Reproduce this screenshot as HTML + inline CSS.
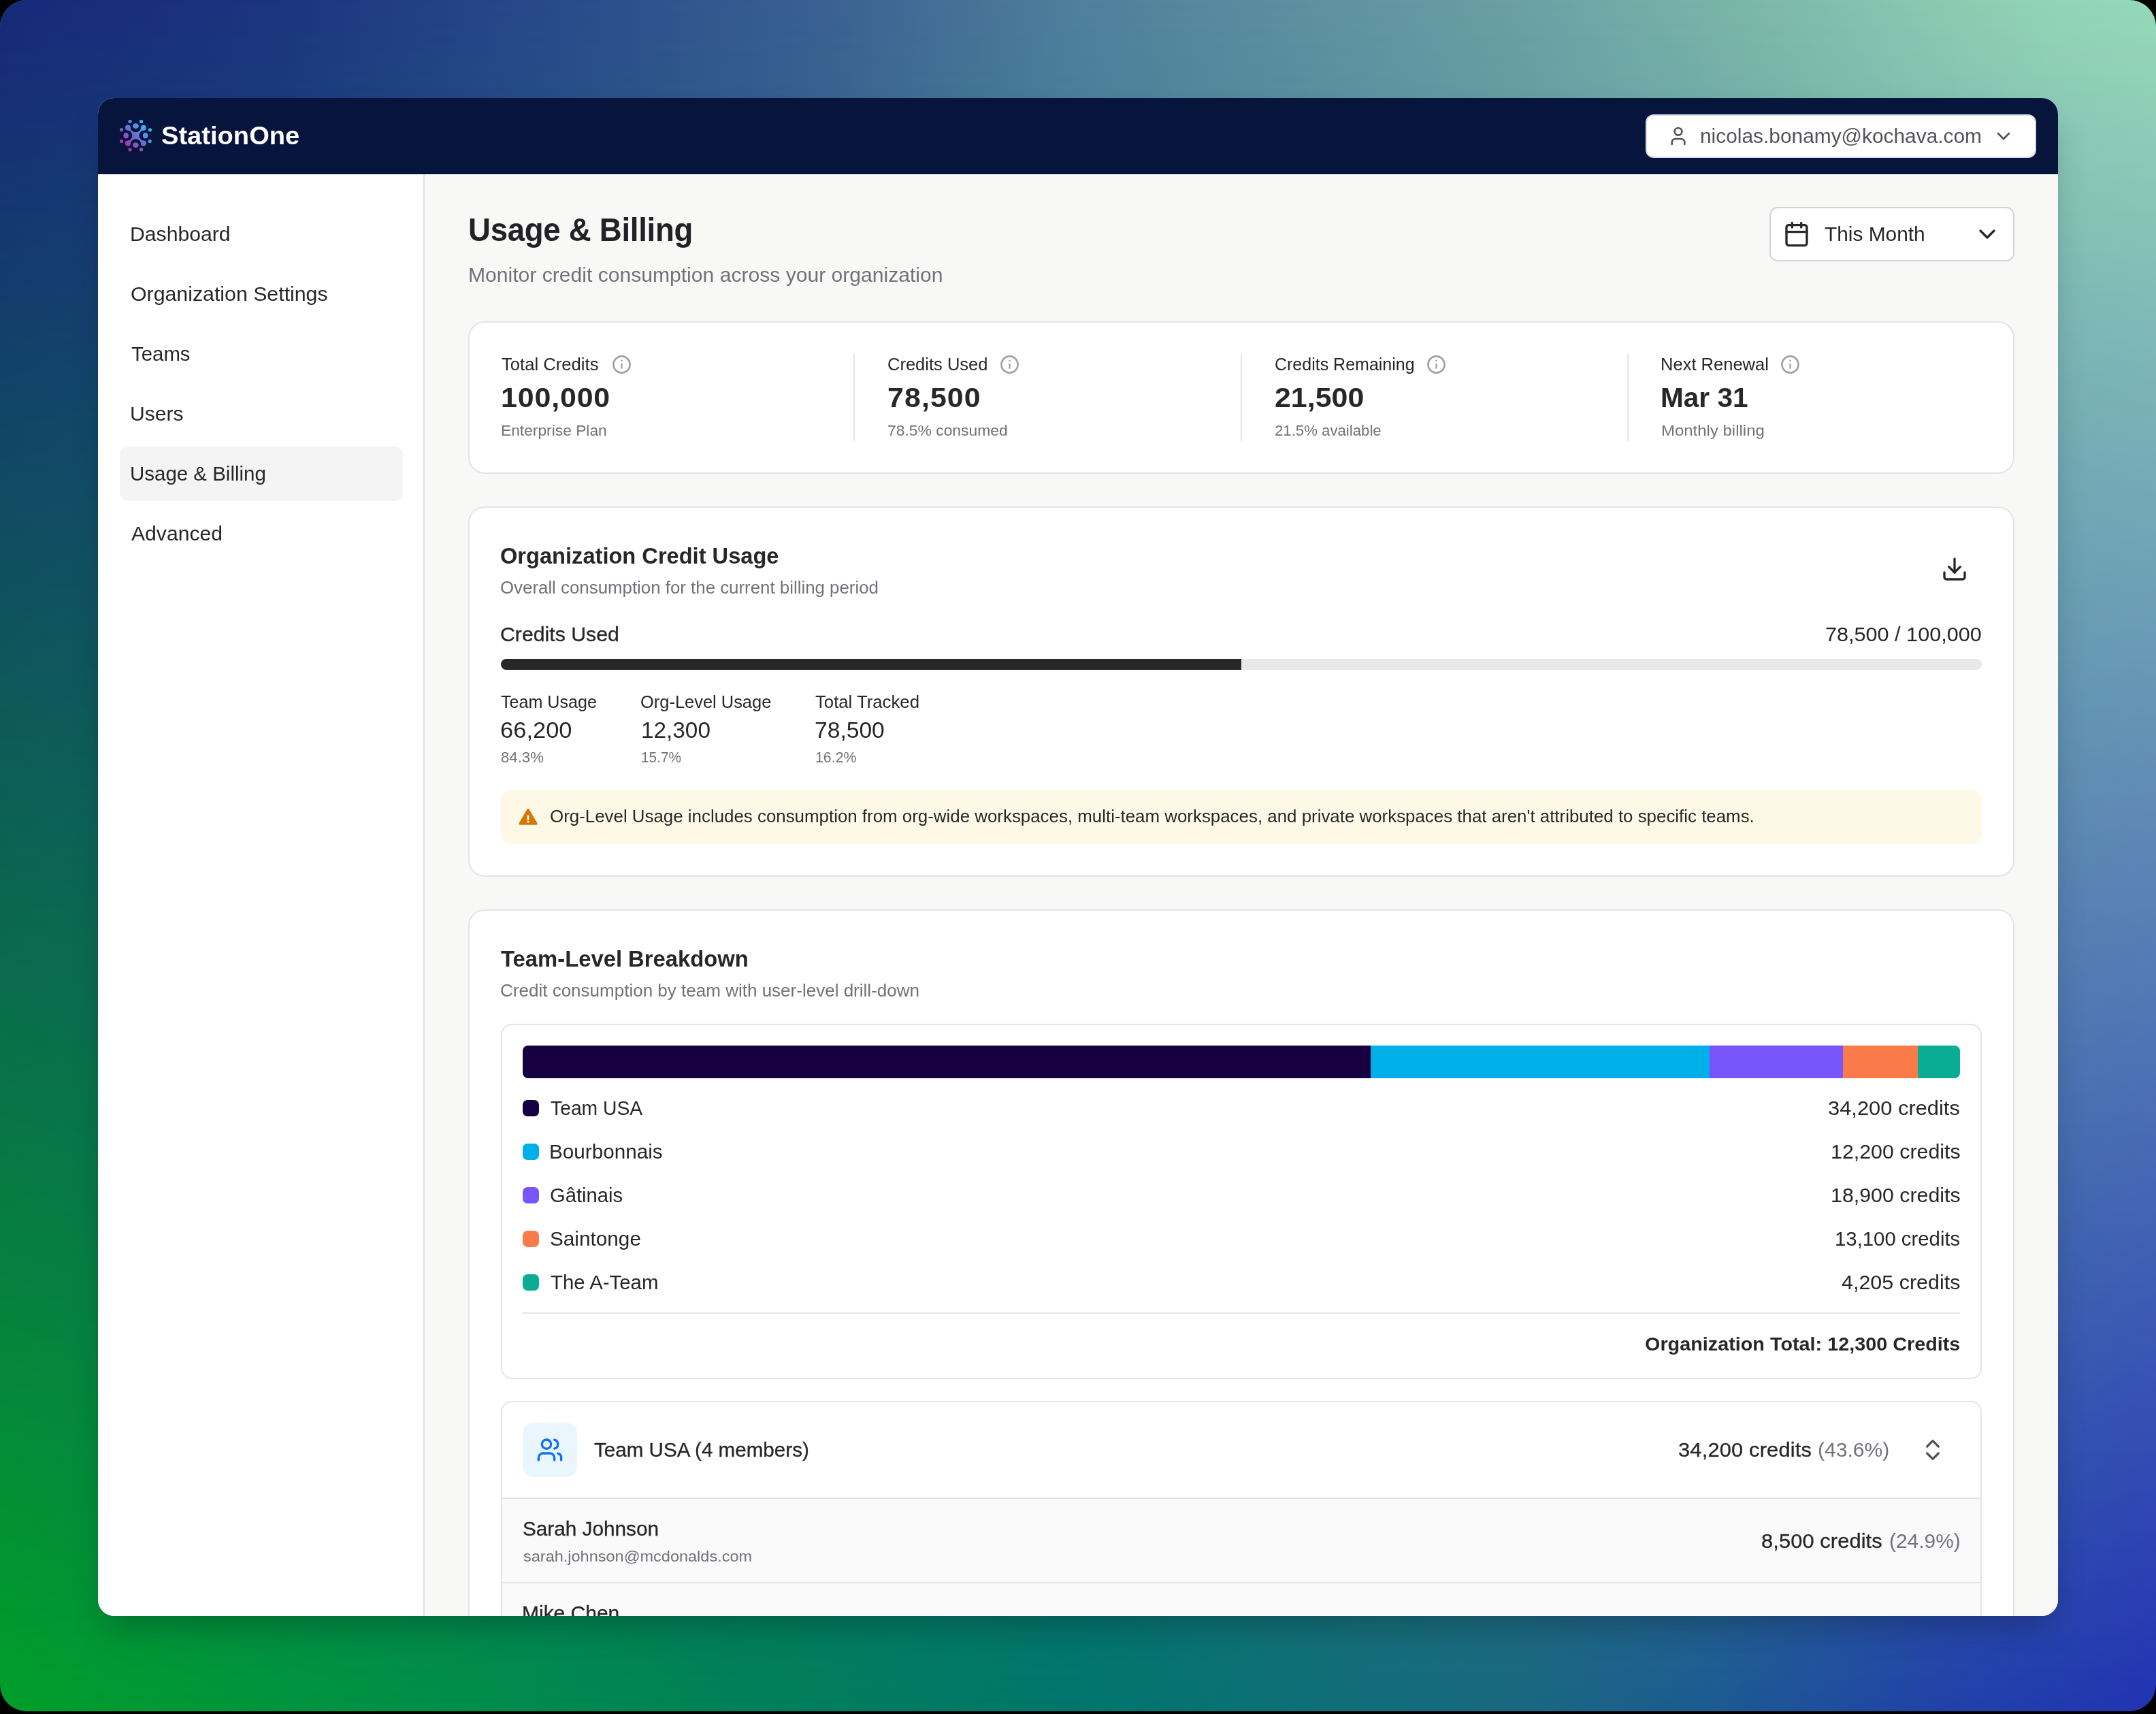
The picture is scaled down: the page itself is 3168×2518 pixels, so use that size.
<!DOCTYPE html>
<html><head><meta charset="utf-8"><title>Usage &amp; Billing</title>
<style>
html,body{margin:0;padding:0;}
body{width:3168px;height:2518px;background:#000;position:relative;overflow:hidden;font-family:"Liberation Sans",sans-serif;}
#bg{position:absolute;left:0;top:0;width:3168px;height:2514px;border-radius:39px;overflow:hidden;background:linear-gradient(to right,#009f2a 0%,#008f48 20%,#008059 35%,#00756c 50%,#0e6f76 60%,#19687f 70%,#1d5a92 80%,#2142a8 90%,#2233b3 100%);}
#bg:before{content:"";position:absolute;inset:0;background:linear-gradient(to right,#17287a 0%,#1b347f 12.6%,#28488a 25%,#3a6092 38%,#4f7f9c 50%,#5d8fa0 60%,#6a9fa4 70%,#7ab4a9 80%,#8bcab1 90%,#92d4b6 95%,#96d9b8 100%);-webkit-mask-image:linear-gradient(to bottom,#000,transparent);mask-image:linear-gradient(to bottom,#000,transparent);}
#win{position:absolute;left:144px;top:144px;width:2880px;height:2230px;border-radius:24px;overflow:hidden;background:#f8f8f6;}
#shadow{position:absolute;left:144px;top:144px;width:2880px;height:2230px;border-radius:24px;box-shadow:0 25px 50px -12px rgba(0,0,0,0.26);}
.t{position:absolute;white-space:pre;line-height:1;transform-origin:0 0;}
</style></head><body>
<div id="bg"></div>
<div id="shadow"></div>
<div id="win">
<div style="position:absolute;left:0px;top:0px;width:2880px;height:112px;background:#07143c;"></div>
<div style="position:absolute;left:0px;top:111px;width:2880px;height:1px;background:#030b2c;"></div>
<div style="position:absolute;left:0px;top:112px;width:478px;height:2118px;background:#fff;"></div>
<div style="position:absolute;left:478px;top:112px;width:2px;height:2118px;background:#e4e4e7;"></div>
<div style="position:absolute;left:480px;top:112px;width:2400px;height:2118px;background:#f8f8f6;"></div>
<div style="position:absolute;left:480px;top:112px;width:2400px;height:1.3px;background:#fff;"></div>
<svg style="position:absolute;left:32px;top:32px" width="48" height="48" viewBox="0 0 48 48">
<defs><linearGradient id="lg" gradientUnits="userSpaceOnUse" x1="42" y1="6" x2="6" y2="42"><stop offset="0" stop-color="#2fc3ff"/><stop offset="0.5" stop-color="#6a6fd2"/><stop offset="1" stop-color="#b62a9e"/></linearGradient></defs>
<g fill="url(#lg)">
<path d="M11.85 11.5 L34.8 34.6 M34.8 11.7 L11.85 34.6" stroke="url(#lg)" stroke-width="9" stroke-linecap="butt" fill="none"/>
<g fill="#07143c"><ellipse cx="23.4" cy="9.2" rx="8.3" ry="9.1"/><ellipse cx="23.4" cy="37.3" rx="8.3" ry="9.1"/><ellipse cx="9.2" cy="23.2" rx="9.1" ry="8.3"/><ellipse cx="37.6" cy="23.2" rx="9.1" ry="8.3"/></g>
<circle cx="11.85" cy="11.5" r="4"/><circle cx="34.8" cy="11.7" r="4"/><circle cx="11.85" cy="34.6" r="4"/><circle cx="34.8" cy="34.6" r="4"/>
<ellipse cx="23.4" cy="9.2" rx="4.4" ry="3.85"/><ellipse cx="23.4" cy="37.2" rx="4.4" ry="3.85"/>
<ellipse cx="9.2" cy="23.2" rx="3.85" ry="4.4"/><ellipse cx="37.6" cy="23.2" rx="3.85" ry="4.4"/>
<circle cx="15" cy="2.5" r="2.6"/><circle cx="31.6" cy="2.5" r="2.6"/><circle cx="44.4" cy="14.8" r="2.6"/><circle cx="44.2" cy="31.45" r="2.6"/><circle cx="31.6" cy="43.7" r="2.6"/><circle cx="15" cy="43.8" r="2.6"/><circle cx="2.6" cy="31.45" r="2.6"/><circle cx="2.6" cy="14.7" r="2.6"/>
</g></svg>
<div style="position:absolute;left:2274px;top:24px;width:574px;height:64px;background:#fff;border:2px solid #dcdcec;border-radius:12px;box-sizing:border-box;"></div>
<svg style="position:absolute;left:2306px;top:40px" width="32" height="32" viewBox="0 0 24 24" fill="none" stroke="#52525b" stroke-width="2" stroke-linecap="round" stroke-linejoin="round" ><path d="M19 21v-2a4 4 0 0 0-4-4H9a4 4 0 0 0-4 4v2"/><circle cx="12" cy="7" r="4"/></svg>
<svg style="position:absolute;left:2784px;top:40px" width="32" height="32" viewBox="0 0 24 24" fill="none" stroke="#52525b" stroke-width="2" stroke-linecap="round" stroke-linejoin="round" ><path d="m6 9 6 6 6-6"/></svg>
<div style="position:absolute;left:32px;top:512px;width:416px;height:80px;background:#f4f4f5;border-radius:12px;"></div>
<div style="position:absolute;left:2456px;top:160px;width:360px;height:80px;background:#fff;border:2px solid #d4d4d8;border-radius:12px;box-sizing:border-box;"></div>
<svg style="position:absolute;left:2476px;top:180px" width="40" height="40" viewBox="0 0 24 24" fill="none" stroke="#27272a" stroke-width="2" stroke-linecap="round" stroke-linejoin="round" ><path d="M8 2v4"/><path d="M16 2v4"/><rect width="18" height="18" x="3" y="4" rx="2"/><path d="M3 10h18"/></svg>
<svg style="position:absolute;left:2756px;top:180px" width="40" height="40" viewBox="0 0 24 24" fill="none" stroke="#27272a" stroke-width="2" stroke-linecap="round" stroke-linejoin="round" ><path d="m6 9 6 6 6-6"/></svg>
<div style="position:absolute;left:544px;top:328px;width:2272px;height:224px;background:#fff;border:2px solid #e4e4e7;border-radius:24px;box-sizing:border-box;"></div>
<div style="position:absolute;left:1110px;top:376px;width:2px;height:128px;background:#e4e4e7;"></div>
<div style="position:absolute;left:1678.5px;top:376px;width:2px;height:128px;background:#e4e4e7;"></div>
<div style="position:absolute;left:2247px;top:376px;width:2px;height:128px;background:#e4e4e7;"></div>
<svg style="position:absolute;left:755.1px;top:377.1px" width="29" height="29" viewBox="0 0 24 24" fill="none" stroke="#a0a0aa" stroke-width="2.2" stroke-linecap="round" stroke-linejoin="round" ><circle cx="12" cy="12" r="10"/><path d="M12 16.4v-4.6" stroke-width="1.9"/><path d="M12 7.3h.01" stroke-width="2.1"/></svg>
<svg style="position:absolute;left:1325.4px;top:377.1px" width="29" height="29" viewBox="0 0 24 24" fill="none" stroke="#a0a0aa" stroke-width="2.2" stroke-linecap="round" stroke-linejoin="round" ><circle cx="12" cy="12" r="10"/><path d="M12 16.4v-4.6" stroke-width="1.9"/><path d="M12 7.3h.01" stroke-width="2.1"/></svg>
<svg style="position:absolute;left:1952.1px;top:377.1px" width="29" height="29" viewBox="0 0 24 24" fill="none" stroke="#a0a0aa" stroke-width="2.2" stroke-linecap="round" stroke-linejoin="round" ><circle cx="12" cy="12" r="10"/><path d="M12 16.4v-4.6" stroke-width="1.9"/><path d="M12 7.3h.01" stroke-width="2.1"/></svg>
<svg style="position:absolute;left:2472.2px;top:377.1px" width="29" height="29" viewBox="0 0 24 24" fill="none" stroke="#a0a0aa" stroke-width="2.2" stroke-linecap="round" stroke-linejoin="round" ><circle cx="12" cy="12" r="10"/><path d="M12 16.4v-4.6" stroke-width="1.9"/><path d="M12 7.3h.01" stroke-width="2.1"/></svg>
<div style="position:absolute;left:544px;top:600px;width:2272px;height:544px;background:#fff;border:2px solid #e4e4e7;border-radius:24px;box-sizing:border-box;"></div>
<svg style="position:absolute;left:2708px;top:672px" width="40" height="40" viewBox="0 0 24 24" fill="none" stroke="#27272a" stroke-width="2" stroke-linecap="round" stroke-linejoin="round" ><path d="M21 15v4a2 2 0 0 1-2 2H5a2 2 0 0 1-2-2v-4"/><polyline points="7 10 12 15 17 10"/><line x1="12" x2="12" y1="15" y2="3"/></svg>
<div style="position:absolute;left:592px;top:824px;width:2176px;height:16px;background:#e8e8ea;border-radius:8px;"></div>
<div style="position:absolute;left:592px;top:824px;width:1088px;height:16px;background:#27272a;border-radius:8px 0 0 8px;"></div>
<div style="position:absolute;left:592px;top:1016px;width:2176px;height:80px;background:#fef9e7;border-radius:16px;"></div>
<svg style="position:absolute;left:616px;top:1040px" width="32" height="32" viewBox="0 0 32 32"><path d="M14.4 4.9 2.7 25.1a1.8 1.8 0 0 0 1.6 2.7h23.4a1.8 1.8 0 0 0 1.6-2.7L17.6 4.9a1.85 1.85 0 0 0-3.2 0z" fill="#d97706"/><path d="M16 14.5v5" stroke="#fff" stroke-width="2.6" stroke-linecap="round"/><circle cx="16" cy="22.9" r="1.5" fill="#fff"/></svg>
<div style="position:absolute;left:544px;top:1192px;width:2272px;height:1400px;background:#fff;border:2px solid #e4e4e7;border-radius:24px;box-sizing:border-box;"></div>
<div style="position:absolute;left:592px;top:1360px;width:2176px;height:522px;background:#fff;border:2px solid #e4e4e7;border-radius:16px;box-sizing:border-box;"></div>
<div style="position:absolute;left:624px;top:1392px;width:1246px;height:48px;background:#160042;border-radius:8px 0 0 8px;"></div>
<div style="position:absolute;left:1870px;top:1392px;width:498px;height:48px;background:#00aee8;"></div>
<div style="position:absolute;left:2368px;top:1392px;width:196px;height:48px;background:#7855fa;"></div>
<div style="position:absolute;left:2564px;top:1392px;width:110px;height:48px;background:#fb7a4a;"></div>
<div style="position:absolute;left:2674px;top:1392px;width:62px;height:48px;background:#0aad94;border-radius:0 8px 8px 0;"></div>
<div style="position:absolute;left:624px;top:1472px;width:24px;height:24px;background:#160042;border-radius:7px;"></div>
<div style="position:absolute;left:624px;top:1536px;width:24px;height:24px;background:#00aee8;border-radius:7px;"></div>
<div style="position:absolute;left:624px;top:1600px;width:24px;height:24px;background:#7855fa;border-radius:7px;"></div>
<div style="position:absolute;left:624px;top:1664px;width:24px;height:24px;background:#fb7a4a;border-radius:7px;"></div>
<div style="position:absolute;left:624px;top:1728px;width:24px;height:24px;background:#0aad94;border-radius:7px;"></div>
<div style="position:absolute;left:624px;top:1784px;width:2112px;height:2px;background:#e4e4e7;"></div>
<div style="position:absolute;left:592px;top:1914px;width:2176px;height:800px;background:#fff;border:2px solid #e4e4e7;border-radius:16px;box-sizing:border-box;overflow:hidden;"><div style="position:absolute;left:0;top:142px;width:2176px;height:700px;background:#fafafa"></div><div style="position:absolute;left:0;top:140px;width:2176px;height:2px;background:#e4e4e7"></div><div style="position:absolute;left:0;top:264px;width:2176px;height:2px;background:#e4e4e7"></div></div>
<div style="position:absolute;left:624px;top:1946px;width:80px;height:80px;background:#eaf6fe;border-radius:16px;"></div>
<svg style="position:absolute;left:644px;top:1966px" width="40" height="40" viewBox="0 0 24 24" fill="none" stroke="#1170f0" stroke-width="2" stroke-linecap="round" stroke-linejoin="round" ><path d="M16 21v-2a4 4 0 0 0-4-4H6a4 4 0 0 0-4 4v2"/><circle cx="9" cy="7" r="4"/><path d="M22 21v-2a4 4 0 0 0-3-3.87"/><path d="M16 3.13a4 4 0 0 1 0 7.75"/></svg>
<svg style="position:absolute;left:2676px;top:1966px" width="40" height="40" viewBox="0 0 24 24" fill="none" stroke="#52525b" stroke-width="2" stroke-linecap="round" stroke-linejoin="round" ><path d="m7 15 5 5 5-5"/><path d="m7 9 5-5 5 5"/></svg>
<div class="t" style="left:93.25px;top:37.51px;font-size:36.20px;letter-spacing:0.000px;transform:scaleX(1.0530);color:#fff;font-weight:700;">StationOne</div>
<div class="t" style="left:2353.77px;top:42.31px;font-size:29.12px;letter-spacing:0.000px;transform:scaleX(1.0265);color:#52525b;">nicolas.bonamy@kochava.com</div>
<div class="t" style="left:46.93px;top:186.00px;font-size:29.12px;letter-spacing:0.000px;transform:scaleX(1.0365);color:#27272a;">Dashboard</div>
<div class="t" style="left:47.96px;top:274.00px;font-size:29.12px;letter-spacing:0.000px;transform:scaleX(1.0406);color:#27272a;">Organization Settings</div>
<div class="t" style="left:49.00px;top:362.00px;font-size:29.12px;letter-spacing:0.000px;transform:scaleX(1.0096);color:#27272a;">Teams</div>
<div class="t" style="left:46.93px;top:450.00px;font-size:29.12px;letter-spacing:0.000px;transform:scaleX(1.0332);color:#27272a;">Users</div>
<div class="t" style="left:46.98px;top:538.00px;font-size:29.12px;letter-spacing:0.000px;transform:scaleX(1.0123);color:#27272a;">Usage &amp; Billing</div>
<div class="t" style="left:49.00px;top:626.00px;font-size:29.12px;letter-spacing:0.000px;transform:scaleX(1.0344);color:#27272a;">Advanced</div>
<div class="t" style="left:544.37px;top:169.21px;font-size:48.50px;letter-spacing:-0.306px;transform:scaleX(0.9400);color:#222226;font-weight:700;">Usage &amp; Billing</div>
<div class="t" style="left:544.18px;top:245.61px;font-size:29.12px;letter-spacing:0.000px;transform:scaleX(1.0338);color:#71717a;">Monitor credit consumption across your organization</div>
<div class="t" style="left:2537.00px;top:186.00px;font-size:29.12px;letter-spacing:0.000px;transform:scaleX(1.0260);color:#27272a;">This Month</div>
<div class="t" style="left:593.20px;top:378.81px;font-size:24.96px;letter-spacing:0.000px;transform:scaleX(1.0275);color:#27272a;">Total Credits</div>
<div class="t" style="left:591.88px;top:420.00px;font-size:40.50px;letter-spacing:0.795px;transform:scaleX(1.0600);color:#27272a;font-weight:700;">100,000</div>
<div class="t" style="left:592.20px;top:477.21px;font-size:22.88px;letter-spacing:0.000px;transform:scaleX(0.9957);color:#71717a;">Enterprise Plan</div>
<div class="t" style="left:1160.18px;top:378.81px;font-size:24.96px;letter-spacing:0.000px;transform:scaleX(1.0222);color:#27272a;">Credits Used</div>
<div class="t" style="left:1160.14px;top:420.00px;font-size:40.50px;letter-spacing:1.013px;transform:scaleX(1.0600);color:#27272a;font-weight:700;">78,500</div>
<div class="t" style="left:1160.20px;top:477.21px;font-size:22.88px;letter-spacing:0.000px;transform:scaleX(0.9998);color:#71717a;">78.5% consumed</div>
<div class="t" style="left:1728.90px;top:378.81px;font-size:24.96px;letter-spacing:0.000px;transform:scaleX(1.0016);color:#27272a;">Credits Remaining</div>
<div class="t" style="left:1728.84px;top:420.00px;font-size:40.50px;letter-spacing:-0.000px;transform:scaleX(1.0598);color:#27272a;font-weight:700;">21,500</div>
<div class="t" style="left:1728.93px;top:477.21px;font-size:22.88px;letter-spacing:0.000px;transform:scaleX(0.9700);color:#71717a;">21.5% available</div>
<div class="t" style="left:2295.95px;top:378.81px;font-size:24.96px;letter-spacing:0.000px;transform:scaleX(1.0231);color:#27272a;">Next Renewal</div>
<div class="t" style="left:2296.00px;top:420.00px;font-size:40.50px;letter-spacing:-0.000px;transform:scaleX(1.0016);color:#27272a;font-weight:700;">Mar 31</div>
<div class="t" style="left:2296.95px;top:477.21px;font-size:22.88px;letter-spacing:0.000px;transform:scaleX(1.0473);color:#71717a;">Monthly billing</div>
<div class="t" style="left:591.40px;top:657.30px;font-size:32.50px;letter-spacing:0.000px;transform:scaleX(1.0033);color:#27272a;font-weight:700;">Organization Credit Usage</div>
<div class="t" style="left:591.36px;top:707.11px;font-size:24.96px;letter-spacing:0.000px;transform:scaleX(1.0357);color:#71717a;">Overall consumption for the current billing period</div>
<div class="t" style="left:591.36px;top:774.22px;font-size:29.12px;letter-spacing:-0.000px;transform:scaleX(1.0388);color:#27272a;-webkit-text-stroke:0.3px #27272a;">Credits Used</div>
<div class="t" style="left:2537.55px;top:774.00px;font-size:29.12px;letter-spacing:0.000px;transform:scaleX(1.0514);color:#27272a;">78,500 / 100,000</div>
<div class="t" style="left:592.40px;top:874.81px;font-size:24.96px;letter-spacing:0.000px;transform:scaleX(1.0057);color:#27272a;">Team Usage</div>
<div class="t" style="left:591.36px;top:912.41px;font-size:33.28px;letter-spacing:0.000px;transform:scaleX(1.0375);color:#27272a;">66,200</div>
<div class="t" style="left:592.40px;top:958.41px;font-size:22.00px;letter-spacing:-0.000px;transform:scaleX(1.0078);color:#71717a;">84.3%</div>
<div class="t" style="left:797.28px;top:874.81px;font-size:24.96px;letter-spacing:0.000px;transform:scaleX(1.0196);color:#27272a;">Org-Level Usage</div>
<div class="t" style="left:797.80px;top:912.41px;font-size:33.28px;letter-spacing:0.000px;transform:scaleX(1.0016);color:#27272a;">12,300</div>
<div class="t" style="left:798.35px;top:958.41px;font-size:22.00px;letter-spacing:0.000px;transform:scaleX(0.9454);color:#71717a;">15.7%</div>
<div class="t" style="left:1054.40px;top:874.81px;font-size:24.96px;letter-spacing:0.000px;transform:scaleX(1.0306);color:#27272a;">Total Tracked</div>
<div class="t" style="left:1053.39px;top:912.41px;font-size:33.28px;letter-spacing:0.000px;transform:scaleX(1.0105);color:#27272a;">78,500</div>
<div class="t" style="left:1054.43px;top:958.41px;font-size:22.00px;letter-spacing:0.000px;transform:scaleX(0.9701);color:#71717a;">16.2%</div>
<div class="t" style="left:663.76px;top:1042.81px;font-size:24.96px;letter-spacing:-0.000px;transform:scaleX(1.0371);color:#27272a;">Org-Level Usage includes consumption from org-wide workspaces, multi-team workspaces, and private workspaces that aren&#x27;t attributed to specific teams.</div>
<div class="t" style="left:592.40px;top:1249.21px;font-size:32.50px;letter-spacing:0.000px;transform:scaleX(1.0090);color:#27272a;font-weight:700;">Team-Level Breakdown</div>
<div class="t" style="left:591.36px;top:1299.00px;font-size:24.96px;letter-spacing:0.000px;transform:scaleX(1.0426);color:#71717a;">Credit consumption by team with user-level drill-down</div>
<div class="t" style="left:664.80px;top:1470.00px;font-size:29.12px;letter-spacing:0.000px;transform:scaleX(0.9720);color:#27272a;">Team USA</div>
<div class="t" style="left:2542.44px;top:1470.00px;font-size:29.12px;letter-spacing:0.001px;transform:scaleX(1.0600);color:#27272a;">34,200 credits</div>
<div class="t" style="left:662.76px;top:1534.00px;font-size:29.12px;letter-spacing:-0.000px;transform:scaleX(1.0193);color:#27272a;">Bourbonnais</div>
<div class="t" style="left:2545.61px;top:1534.00px;font-size:29.12px;letter-spacing:0.000px;transform:scaleX(1.0427);color:#27272a;">12,200 credits</div>
<div class="t" style="left:663.80px;top:1598.00px;font-size:29.12px;letter-spacing:-0.000px;transform:scaleX(1.0016);color:#27272a;">Gâtinais</div>
<div class="t" style="left:2545.61px;top:1598.00px;font-size:29.12px;letter-spacing:0.000px;transform:scaleX(1.0427);color:#27272a;">18,900 credits</div>
<div class="t" style="left:663.78px;top:1662.00px;font-size:29.12px;letter-spacing:0.000px;transform:scaleX(1.0216);color:#27272a;">Saintonge</div>
<div class="t" style="left:2551.98px;top:1662.00px;font-size:29.12px;letter-spacing:0.000px;transform:scaleX(1.0077);color:#27272a;">13,100 credits</div>
<div class="t" style="left:664.80px;top:1726.00px;font-size:29.12px;letter-spacing:0.000px;transform:scaleX(1.0096);color:#27272a;">The A-Team</div>
<div class="t" style="left:2561.90px;top:1726.00px;font-size:29.12px;letter-spacing:0.000px;transform:scaleX(1.0463);color:#27272a;">4,205 credits</div>
<div class="t" style="left:2273.19px;top:1816.00px;font-size:28.50px;letter-spacing:-0.000px;transform:scaleX(1.0101);color:#27272a;font-weight:700;">Organization Total: 12,300 Credits</div>
<div class="t" style="left:729.30px;top:1972.41px;font-size:29.12px;letter-spacing:0.000px;transform:scaleX(1.0168);color:#27272a;-webkit-text-stroke:0.3px #27272a;">Team USA (4 members)</div>
<div class="t" style="left:2321.94px;top:1972.21px;font-size:29.12px;letter-spacing:0.154px;transform:scaleX(1.0600);color:#27272a;-webkit-text-stroke:0.3px #27272a;">34,200 credits</div>
<div class="t" style="left:2526.77px;top:1972.21px;font-size:29.12px;letter-spacing:0.000px;transform:scaleX(1.0319);color:#71717a;">(43.6%)</div>
<div class="t" style="left:623.58px;top:2088.21px;font-size:29.12px;letter-spacing:0.000px;transform:scaleX(1.0215);color:#27272a;-webkit-text-stroke:0.3px #27272a;">Sarah Johnson</div>
<div class="t" style="left:624.60px;top:2131.01px;font-size:22.88px;letter-spacing:0.000px;transform:scaleX(1.0274);color:#71717a;">sarah.johnson@mcdonalds.com</div>
<div class="t" style="left:2443.84px;top:2106.00px;font-size:29.12px;letter-spacing:0.077px;transform:scaleX(1.0600);color:#27272a;-webkit-text-stroke:0.3px #27272a;">8,500 credits</div>
<div class="t" style="left:2631.77px;top:2106.00px;font-size:29.12px;letter-spacing:0.000px;transform:scaleX(1.0279);color:#71717a;">(24.9%)</div>
<div class="t" style="left:622.54px;top:2212.21px;font-size:29.12px;letter-spacing:0.000px;transform:scaleX(1.0298);color:#27272a;-webkit-text-stroke:0.3px #27272a;">Mike Chen</div>
</div>
</body></html>
